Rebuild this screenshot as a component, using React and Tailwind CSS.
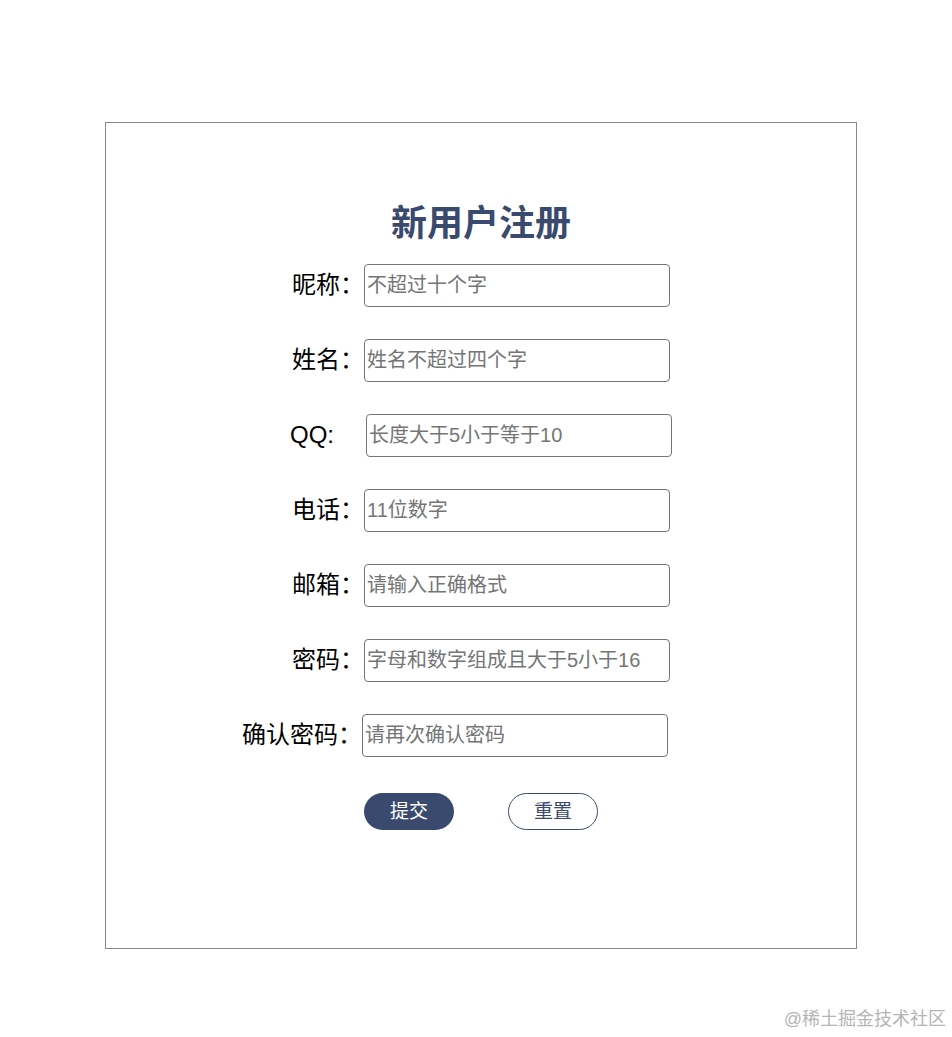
export default function App() {
  const rows = [
    { label: '昵称：', ph: '不超过十个字' },
    { label: '姓名：', ph: '姓名不超过四个字' },
    { label: 'QQ:', ph: '长度大于5小于等于10', labelClass: 'w-[76px]' },
    { label: '电话：', ph: '11位数字' },
    { label: '邮箱：', ph: '请输入正确格式' },
    { label: '密码：', ph: '字母和数字组成且大于5小于16' },
    { label: '确认密码：', ph: '请再次确认密码', rowClass: 'pr-[52px]' },
  ]

  return (
    <div className="relative min-h-[1037px] bg-white pt-[122px] font-['Liberation_Sans','Noto_Sans_CJK_SC',sans-serif]">
      <div className="ml-[105px] w-[752px] h-[827px] border border-[#888] flex flex-col items-center pt-[79px]">
        <h1 className="text-[36px] leading-[44px] font-bold text-[#3a4a6f]">新用户注册</h1>

        <form className="flex flex-col gap-[32px] mt-[18px] w-full" onSubmit={(e) => e.preventDefault()}>
          {rows.map((r) => (
            <div key={r.label} className={`flex items-center justify-center h-[43px] ${r.rowClass || ''}`}>
              <label className={`text-[24px] leading-[30px] text-black whitespace-nowrap -mt-[2px] ${r.labelClass || ''}`}>
                {r.label}
              </label>
              <input
                type="text"
                placeholder={r.ph}
                className="w-[306px] h-[43px] px-[2px] border border-[#767676] rounded-[4px] text-[20px] placeholder:text-[#757575] outline-none"
              />
            </div>
          ))}

          <div className="flex justify-center gap-[54px] mt-[4px]">
            <button type="submit" className="w-[90px] h-[37px] rounded-full bg-[#3a4a6f] text-white text-[19px] leading-none">
              提交
            </button>
            <button type="reset" className="w-[90px] h-[37px] rounded-full border border-[#3a4a6f] bg-white text-[#3a4a6f] text-[19px] leading-none">
              重置
            </button>
          </div>
        </form>
      </div>

      <div className="absolute right-[6px] bottom-[6px] text-[18px] leading-[24px] text-[#b5b5b5]">@稀土掘金技术社区</div>
    </div>
  )
}
